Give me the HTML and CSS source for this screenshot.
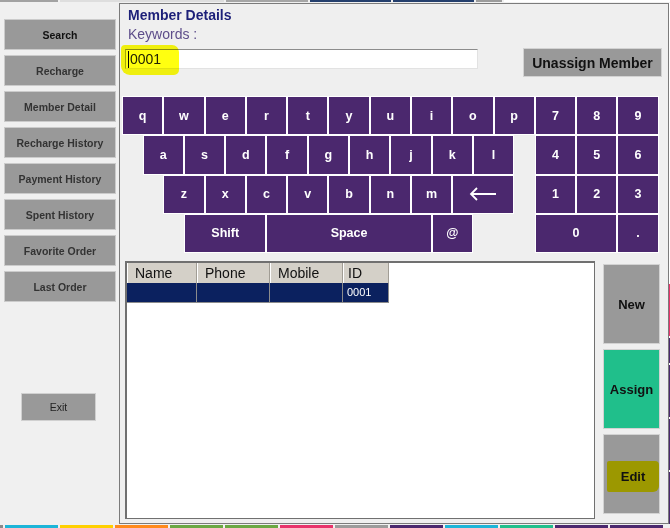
FILE: index.html
```html
<!DOCTYPE html>
<html lang="en">
<head>
    <meta charset="UTF-8">
    <meta name="viewport" content="width=device-width, initial-scale=1.0">
    <title>Member Details</title>
    <link rel="stylesheet" href="styles.css">
</head>
<body>
<div class="screen">
    <!-- strip of the windows behind -->
    <div class="topbar">
        <span class="tb-gray"></span>
        <span class="tb-light"></span>
        <span class="tb-mid"></span>
        <span class="tb-blue"></span>
        <span class="tb-blue"></span>
        <span class="tb-small"></span>
        <span class="tb-white"></span>
    </div>

    <div class="main">
        <aside class="sidebar">
            <div class="menu">
                <button class="menu-btn active">Search</button>
                <button class="menu-btn">Recharge</button>
                <button class="menu-btn">Member Detail</button>
                <button class="menu-btn">Recharge History</button>
                <button class="menu-btn">Payment History</button>
                <button class="menu-btn">Spent History</button>
                <button class="menu-btn">Favorite Order</button>
                <button class="menu-btn">Last Order</button>
            </div>
            <button class="exit">Exit</button>
        </aside>

        <section class="panel">
            <h1 class="title">Member Details</h1>
            <div class="label">Keywords :</div>

            <div class="search-row">
                <div class="keyword-box">
                    <span class="caret"></span>0001
                    <span class="marker"></span>
                </div>
                <button class="unassign">Unassign Member</button>
            </div>

            <div class="keyboard">
                <div class="key">q</div>
                <div class="key">w</div>
                <div class="key">e</div>
                <div class="key">r</div>
                <div class="key">t</div>
                <div class="key">y</div>
                <div class="key">u</div>
                <div class="key">i</div>
                <div class="key">o</div>
                <div class="key">p</div>
                <div class="key numpad">7</div>
                <div class="key">8</div>
                <div class="key">9</div>

                <div class="key indent-1">a</div>
                <div class="key">s</div>
                <div class="key">d</div>
                <div class="key">f</div>
                <div class="key">g</div>
                <div class="key">h</div>
                <div class="key">j</div>
                <div class="key">k</div>
                <div class="key">l</div>
                <div class="key numpad">4</div>
                <div class="key">5</div>
                <div class="key">6</div>

                <div class="key indent-2">z</div>
                <div class="key">x</div>
                <div class="key">c</div>
                <div class="key">v</div>
                <div class="key">b</div>
                <div class="key">n</div>
                <div class="key">m</div>
                <div class="key back">
                    <svg width="28" height="14" viewBox="0 0 28 14">
                        <path d="M2 7 H27 M8 1 L2 7 L8 13" fill="none" stroke="#fff" stroke-width="1.8"/>
                    </svg>
                </div>
                <div class="key numpad">1</div>
                <div class="key">2</div>
                <div class="key">3</div>

                <div class="key indent-3 wide">Shift</div>
                <div class="key space">Space</div>
                <div class="key">@</div>
                <div class="key numpad wide">0</div>
                <div class="key">.</div>
            </div>

            <div class="result-row">
                <div class="list">
                    <div class="grid-row head">
                        <div class="cell">Name</div>
                        <div class="cell">Phone</div>
                        <div class="cell">Mobile</div>
                        <div class="cell id">ID</div>
                    </div>
                    <div class="grid-row selected">
                        <div class="cell"></div>
                        <div class="cell"></div>
                        <div class="cell"></div>
                        <div class="cell id">0001</div>
                    </div>
                </div>
                <div class="side">
                    <button class="side-btn">New</button>
                    <button class="side-btn assign">Assign</button>
                    <button class="side-btn"><span class="edit-mark">Edit</span></button>
                </div>
            </div>
        </section>

        <div class="edge">
            <span class="edge-white"></span>
            <span class="edge-pink"></span>
            <span class="edge-purple short"></span>
            <span class="edge-purple"></span>
            <span class="edge-purple"></span>
            <span class="edge-purple"></span>
        </div>
    </div>

    <!-- category tabs along the bottom -->
    <div class="taskbar">
        <span class="tab stub"></span>
        <span class="tab cyan"></span>
        <span class="tab yellow"></span>
        <span class="tab orange"></span>
        <span class="tab green"></span>
        <span class="tab green"></span>
        <span class="tab pink"></span>
        <span class="tab gray"></span>
        <span class="tab purple"></span>
        <span class="tab cyan"></span>
        <span class="tab teal"></span>
        <span class="tab purple"></span>
        <span class="tab purple"></span>
    </div>
</div>
</body>
</html>
```

FILE: styles.css
```css
* {
    box-sizing: border-box;
}
body {
    margin: 0;
    font-family: "Liberation Sans", Arial, sans-serif;
}
button {
    font-family: inherit;
    padding: 0;
    cursor: pointer;
}
.screen {
    width: 670px;
    height: 528px;
    overflow: hidden;
    display: flex;
    flex-direction: column;
    background: #f0f0f0;
}

/* top strip */
.topbar {
    display: flex;
    gap: 2px;
    height: 2px;
    margin-bottom: 1px;
}
.topbar span {
    display: block;
    height: 2px;
}
.tb-gray { width: 58px; background: #a2a2a2; }
.tb-light { width: 164px; background: #dedede; }
.tb-mid { width: 82px; background: #a6a6a6; }
.tb-blue { width: 81px; background: #243f6d; }
.tb-small { width: 26px; background: #9c9c9c; }
.tb-white { flex: 1; background: #fff; }

.main {
    display: flex;
    height: 521px;
}

/* left menu */
.sidebar {
    width: 119px;
    padding: 16px 0 0 4px;
}
.menu {
    display: flex;
    flex-direction: column;
    gap: 5px;
    width: 112px;
}
.menu-btn {
    height: 31px;
    background: #999;
    border: 1px solid #cbcbcb;
    color: #333;
    font-size: 10.5px;
    font-weight: bold;
}
.menu-btn.active {
    color: #111;
}
.exit {
    display: block;
    margin: 91px 0 0 17px;
    width: 75px;
    height: 28px;
    background: #999;
    border: 1px solid #d0d0d0;
    color: #222;
    font-size: 10.5px;
}

/* main panel */
.panel {
    width: 550px;
    height: 521px;
    border: 1px solid #7b7b7b;
    background: #efefef;
}
.title {
    margin: 3px 0 0 8px;
    font-size: 14px;
    line-height: 16px;
    color: #1c1f78;
}
.label {
    margin: 3px 0 0 8px;
    font-size: 14px;
    line-height: 16px;
    color: #5d4d8a;
}
.search-row {
    display: flex;
    justify-content: space-between;
    align-items: flex-start;
    margin-top: 6px;
    padding: 0 6px 0 5px;
}
.keyword-box {
    position: relative;
    display: flex;
    align-items: center;
    margin-top: 1px;
    width: 353px;
    height: 20px;
    padding-left: 2px;
    background: #fff;
    border: 1px solid #e2e2e2;
    border-top-color: #8c8c8c;
    border-left-color: #a4a4a4;
    font-size: 14px;
    color: #222;
}
.caret {
    display: block;
    width: 1px;
    height: 17px;
    margin-right: 1px;
    background: #000;
}
.marker {
    position: absolute;
    left: -5px;
    top: -5px;
    width: 58px;
    height: 30px;
    background: #ffff10;
    border-radius: 4px 7px 5px 9px;
    mix-blend-mode: multiply;
}
.unassign {
    width: 139px;
    height: 29px;
    background: #999;
    border: 1px solid #d2d2d2;
    color: #111;
    font-size: 14px;
    font-weight: bold;
}

/* on-screen keyboard */
.keyboard {
    display: grid;
    grid-template-columns: repeat(26, 20.65px);
    grid-template-rows: repeat(4, 39.25px);
    margin: 19px 0 0 2px;
}
.key {
    grid-column-end: span 2;
    display: flex;
    align-items: center;
    justify-content: center;
    background: #4b286e;
    border: 1px solid #fff;
    color: #fff;
    font-size: 12.5px;
    font-weight: bold;
}
.indent-1 { grid-column-start: 2; }
.indent-2 { grid-column-start: 3; }
.indent-3 { grid-column-start: 4; }
.numpad { grid-column-start: 21; }
.back { grid-column-end: span 3; }
.wide { grid-column-end: span 4; }
.space { grid-column-end: span 8; }

/* result list and actions */
.result-row {
    display: flex;
    gap: 8px;
    margin-top: 8px;
    padding-left: 5px;
}
.list {
    width: 470px;
    height: 258px;
    background: #fff;
    border: 2px solid #707070;
    border-right-width: 1px;
    border-bottom-width: 1px;
}
.grid-row {
    display: grid;
    grid-template-columns: 70px 73px 73px 46px;
    height: 20px;
}
.cell {
    padding-left: 8px;
    border-right: 1px solid #8c8c8c;
}
.head .cell {
    background: #d4d0c8;
    box-shadow: inset 1px 0 #fff;
    border-right-color: #a19d95;
    font-size: 14px;
    line-height: 20px;
    color: #111;
}
.head .cell.id {
    padding-left: 5px;
}
.selected .cell {
    background: #0b215f;
    border-bottom: 1px solid #8c8c8c;
    color: #fff;
    font-size: 11px;
    line-height: 19px;
}
.selected .cell.id {
    padding-left: 4px;
}
.side {
    display: flex;
    flex-direction: column;
    gap: 5px;
    margin-top: 3px;
}
.side-btn {
    width: 57px;
    height: 80px;
    background: #999;
    border: 1px solid #d2d2d2;
    color: #111;
    font-size: 13px;
    font-weight: bold;
}
.side-btn.assign {
    background: #20bf8b;
}
.edit-mark {
    display: inline-flex;
    align-items: center;
    justify-content: center;
    width: 52px;
    height: 31px;
    margin: 5px 0 0 3px;
    background: #9c9800;
    border-radius: 2px 4px 6px 2px;
}

/* right edge: windows behind the panel */
.edge {
    flex: 1;
    display: flex;
    flex-direction: column;
    gap: 2px;
    background: #fff;
}
.edge span {
    display: block;
    height: 53px;
}
.edge-white { height: 286px !important; background: #fff; }
.edge-pink { background: #e8336b; }
.edge-purple { background: #4b286e; }
.edge-purple.short { height: 26px; }

/* bottom tabs */
.taskbar {
    display: flex;
    gap: 2px;
    margin-top: 1px;
    height: 3px;
}
.tab {
    display: block;
    width: 53px;
    height: 3px;
}
.tab.stub { width: 3px; background: #8a8a8a; }
.cyan { background: #1cb5d8; }
.yellow { background: #ffd000; }
.orange { background: #ff8a1c; }
.green { background: #6aa843; }
.pink { background: #e8336b; }
.gray { background: #9b9b9b; }
.purple { background: #4b286e; }
.teal { background: #20bf8b; }
```
